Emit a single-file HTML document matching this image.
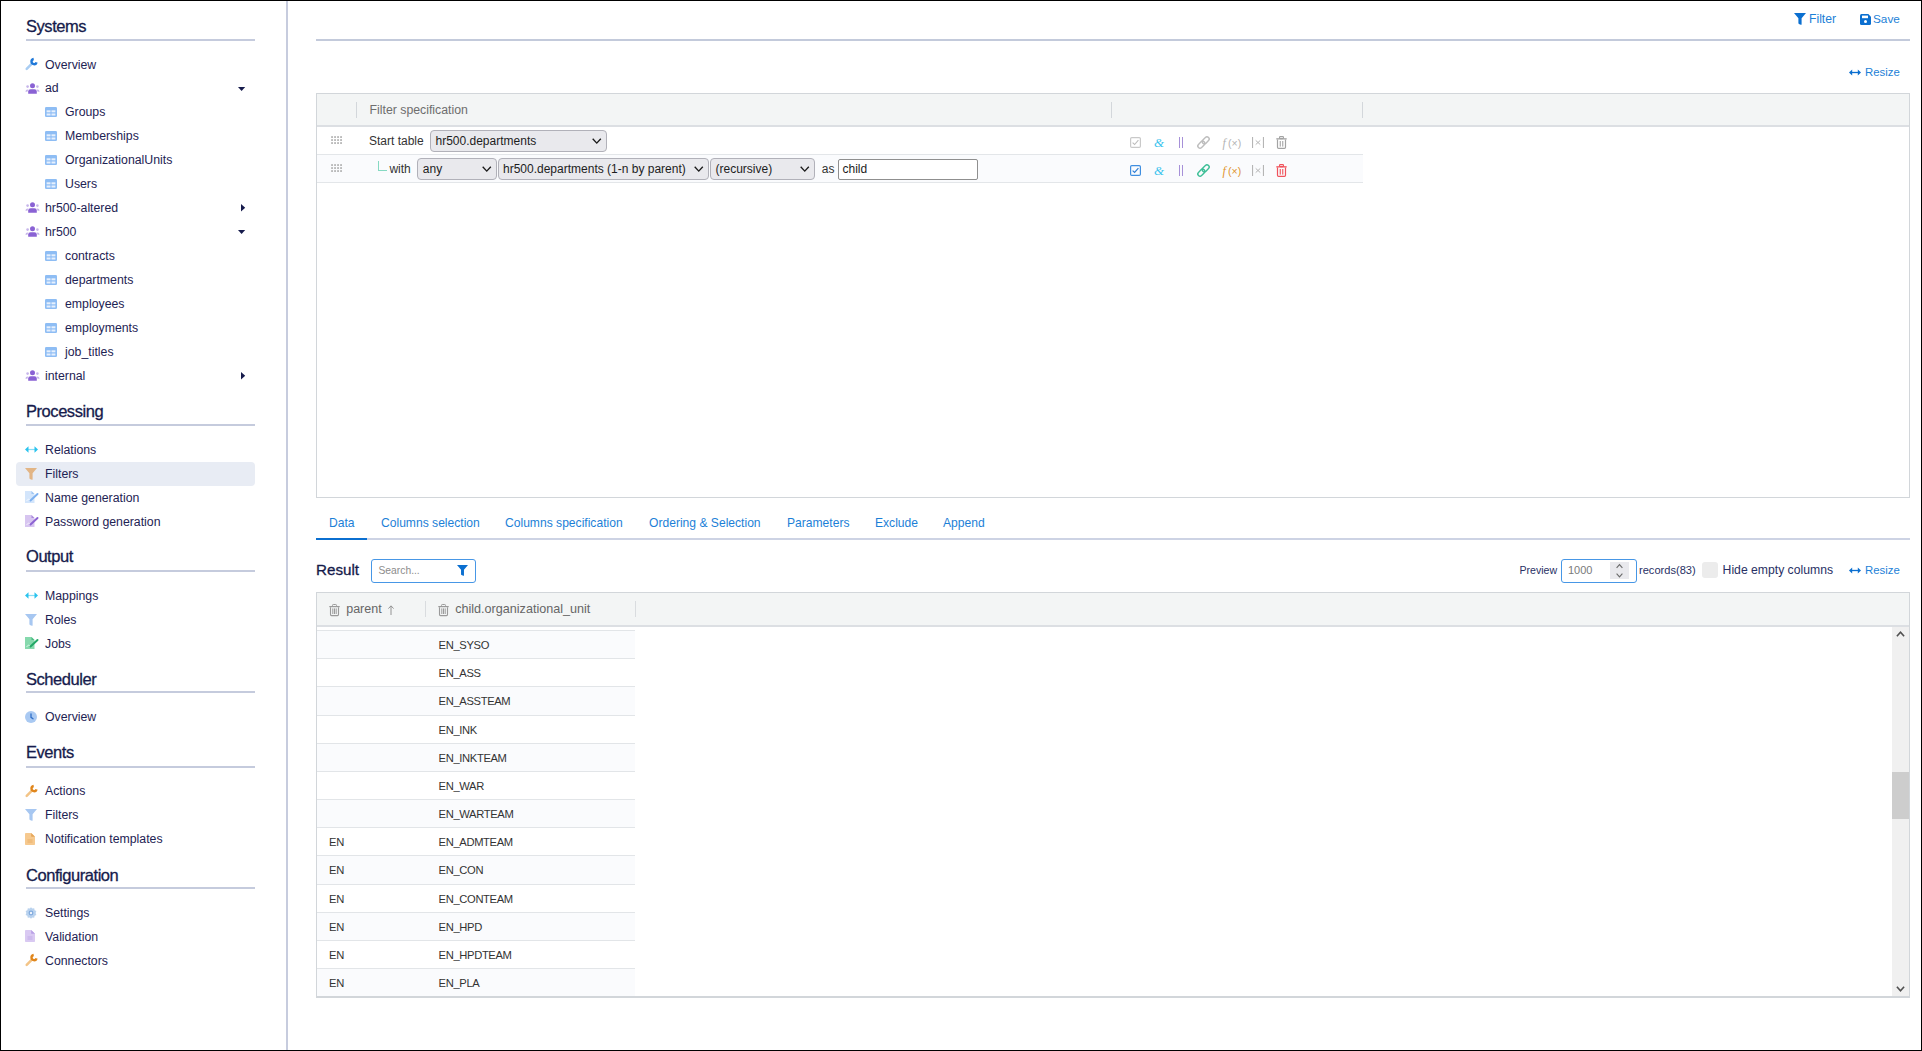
<!DOCTYPE html><html><head><meta charset="utf-8"><style>
html,body{margin:0;padding:0;background:#fff;}
body{width:1922px;height:1051px;position:relative;overflow:hidden;font-family:"Liberation Sans",sans-serif;}
.a{position:absolute;}
.t{position:absolute;white-space:nowrap;line-height:0;}
svg{overflow:visible}
</style></head><body>
<div class="a" style="left:0px;top:0px;width:1922px;height:1px;background:#000"></div>
<div class="a" style="left:0px;top:1050px;width:1922px;height:1px;background:#000"></div>
<div class="a" style="left:0px;top:0px;width:1px;height:1051px;background:#000"></div>
<div class="a" style="left:1921px;top:0px;width:1px;height:1051px;background:#000"></div>
<div class="a" style="left:286px;top:1px;width:2px;height:1049px;background:#c7ccde"></div>
<div class="a" style="left:16px;top:462px;width:239px;height:24px;background:#e8ecf4;border-radius:4px"></div>
<div class="t" style="left:26px;top:26.28px;font-size:16.5px;color:#161b4c;letter-spacing:-0.45px;-webkit-text-stroke:0.3px #161b4c">Systems</div>
<div class="a" style="left:26px;top:39px;width:229px;height:2px;background:#c5cbdd"></div>
<svg class="a" style="left:25px;top:57.8px" width="13" height="13" viewBox="0 0 13 13"><path d="M6.9 5.6 L1.7 10.8" stroke="#a9cdf3" stroke-width="2.5" stroke-linecap="round"/><path d="M11.6 4.3 A2.6 2.6 0 1 1 8.7 1.0" stroke="#1f78d8" stroke-width="2.4" fill="none"/></svg>
<div class="t" style="left:45px;top:64.54px;font-size:12.3px;color:#1e2354;">Overview</div>
<svg class="a" style="left:25px;top:82.74px" width="15" height="11" viewBox="0 0 15 11"><circle cx="7.5" cy="2.7" r="2.5" fill="#8a62d4"/><path d="M3.2 10.8 V8.6 Q3.2 6.3 5.6 6.3 H9.4 Q11.8 6.3 11.8 8.6 V10.8 Z" fill="#8a62d4"/><circle cx="2.6" cy="3.6" r="1.3" fill="#c6b5ea"/><circle cx="12.4" cy="3.6" r="1.3" fill="#c6b5ea"/><path d="M0.4 8.8 Q0.6 6.6 2.6 6.6 Q3.2 6.6 3.5 6.9 Q2.5 7.6 2.4 8.8 Z" fill="#c6b5ea"/><path d="M14.6 8.8 Q14.4 6.6 12.4 6.6 Q11.8 6.6 11.5 6.9 Q12.5 7.6 12.6 8.8 Z" fill="#c6b5ea"/></svg>
<div class="t" style="left:45px;top:88.48px;font-size:12.3px;color:#1e2354;">ad</div>
<svg class="a" style="left:237.7px;top:86.53999999999999px" width="7" height="4" viewBox="0 0 7 4"><path d="M0 0 H7.2 L3.6 4 Z" fill="#161b4c"/></svg>
<svg class="a" style="left:45px;top:107.38000000000001px" width="12" height="10" viewBox="0 0 12 10"><rect x="0" y="0" width="12" height="10" rx="1.3" fill="#8ebdf4"/><rect x="1.6" y="3.3" width="3.9" height="2" fill="#e6f0fd"/><rect x="6.5" y="3.3" width="3.9" height="2" fill="#e6f0fd"/><rect x="1.6" y="6.5" width="3.9" height="2" fill="#e6f0fd"/><rect x="6.5" y="6.5" width="3.9" height="2" fill="#e6f0fd"/></svg>
<div class="t" style="left:65px;top:112.42px;font-size:12.3px;color:#1e2354;">Groups</div>
<svg class="a" style="left:45px;top:131.32px" width="12" height="10" viewBox="0 0 12 10"><rect x="0" y="0" width="12" height="10" rx="1.3" fill="#8ebdf4"/><rect x="1.6" y="3.3" width="3.9" height="2" fill="#e6f0fd"/><rect x="6.5" y="3.3" width="3.9" height="2" fill="#e6f0fd"/><rect x="1.6" y="6.5" width="3.9" height="2" fill="#e6f0fd"/><rect x="6.5" y="6.5" width="3.9" height="2" fill="#e6f0fd"/></svg>
<div class="t" style="left:65px;top:136.36px;font-size:12.3px;color:#1e2354;">Memberships</div>
<svg class="a" style="left:45px;top:155.26px" width="12" height="10" viewBox="0 0 12 10"><rect x="0" y="0" width="12" height="10" rx="1.3" fill="#8ebdf4"/><rect x="1.6" y="3.3" width="3.9" height="2" fill="#e6f0fd"/><rect x="6.5" y="3.3" width="3.9" height="2" fill="#e6f0fd"/><rect x="1.6" y="6.5" width="3.9" height="2" fill="#e6f0fd"/><rect x="6.5" y="6.5" width="3.9" height="2" fill="#e6f0fd"/></svg>
<div class="t" style="left:65px;top:160.30px;font-size:12.3px;color:#1e2354;">OrganizationalUnits</div>
<svg class="a" style="left:45px;top:179.2px" width="12" height="10" viewBox="0 0 12 10"><rect x="0" y="0" width="12" height="10" rx="1.3" fill="#8ebdf4"/><rect x="1.6" y="3.3" width="3.9" height="2" fill="#e6f0fd"/><rect x="6.5" y="3.3" width="3.9" height="2" fill="#e6f0fd"/><rect x="1.6" y="6.5" width="3.9" height="2" fill="#e6f0fd"/><rect x="6.5" y="6.5" width="3.9" height="2" fill="#e6f0fd"/></svg>
<div class="t" style="left:65px;top:184.24px;font-size:12.3px;color:#1e2354;">Users</div>
<svg class="a" style="left:25px;top:202.44px" width="15" height="11" viewBox="0 0 15 11"><circle cx="7.5" cy="2.7" r="2.5" fill="#8a62d4"/><path d="M3.2 10.8 V8.6 Q3.2 6.3 5.6 6.3 H9.4 Q11.8 6.3 11.8 8.6 V10.8 Z" fill="#8a62d4"/><circle cx="2.6" cy="3.6" r="1.3" fill="#c6b5ea"/><circle cx="12.4" cy="3.6" r="1.3" fill="#c6b5ea"/><path d="M0.4 8.8 Q0.6 6.6 2.6 6.6 Q3.2 6.6 3.5 6.9 Q2.5 7.6 2.4 8.8 Z" fill="#c6b5ea"/><path d="M14.6 8.8 Q14.4 6.6 12.4 6.6 Q11.8 6.6 11.5 6.9 Q12.5 7.6 12.6 8.8 Z" fill="#c6b5ea"/></svg>
<div class="t" style="left:45px;top:208.18px;font-size:12.3px;color:#1e2354;">hr500-altered</div>
<svg class="a" style="left:241.2px;top:204.44px" width="5" height="8" viewBox="0 0 5 8"><path d="M0 0 V7.4 L4.2 3.7 Z" fill="#161b4c"/></svg>
<svg class="a" style="left:25px;top:226.38px" width="15" height="11" viewBox="0 0 15 11"><circle cx="7.5" cy="2.7" r="2.5" fill="#8a62d4"/><path d="M3.2 10.8 V8.6 Q3.2 6.3 5.6 6.3 H9.4 Q11.8 6.3 11.8 8.6 V10.8 Z" fill="#8a62d4"/><circle cx="2.6" cy="3.6" r="1.3" fill="#c6b5ea"/><circle cx="12.4" cy="3.6" r="1.3" fill="#c6b5ea"/><path d="M0.4 8.8 Q0.6 6.6 2.6 6.6 Q3.2 6.6 3.5 6.9 Q2.5 7.6 2.4 8.8 Z" fill="#c6b5ea"/><path d="M14.6 8.8 Q14.4 6.6 12.4 6.6 Q11.8 6.6 11.5 6.9 Q12.5 7.6 12.6 8.8 Z" fill="#c6b5ea"/></svg>
<div class="t" style="left:45px;top:232.12px;font-size:12.3px;color:#1e2354;">hr500</div>
<svg class="a" style="left:237.7px;top:230.18px" width="7" height="4" viewBox="0 0 7 4"><path d="M0 0 H7.2 L3.6 4 Z" fill="#161b4c"/></svg>
<svg class="a" style="left:45px;top:251.01999999999998px" width="12" height="10" viewBox="0 0 12 10"><rect x="0" y="0" width="12" height="10" rx="1.3" fill="#8ebdf4"/><rect x="1.6" y="3.3" width="3.9" height="2" fill="#e6f0fd"/><rect x="6.5" y="3.3" width="3.9" height="2" fill="#e6f0fd"/><rect x="1.6" y="6.5" width="3.9" height="2" fill="#e6f0fd"/><rect x="6.5" y="6.5" width="3.9" height="2" fill="#e6f0fd"/></svg>
<div class="t" style="left:65px;top:256.06px;font-size:12.3px;color:#1e2354;">contracts</div>
<svg class="a" style="left:45px;top:274.96px" width="12" height="10" viewBox="0 0 12 10"><rect x="0" y="0" width="12" height="10" rx="1.3" fill="#8ebdf4"/><rect x="1.6" y="3.3" width="3.9" height="2" fill="#e6f0fd"/><rect x="6.5" y="3.3" width="3.9" height="2" fill="#e6f0fd"/><rect x="1.6" y="6.5" width="3.9" height="2" fill="#e6f0fd"/><rect x="6.5" y="6.5" width="3.9" height="2" fill="#e6f0fd"/></svg>
<div class="t" style="left:65px;top:280.00px;font-size:12.3px;color:#1e2354;">departments</div>
<svg class="a" style="left:45px;top:298.9px" width="12" height="10" viewBox="0 0 12 10"><rect x="0" y="0" width="12" height="10" rx="1.3" fill="#8ebdf4"/><rect x="1.6" y="3.3" width="3.9" height="2" fill="#e6f0fd"/><rect x="6.5" y="3.3" width="3.9" height="2" fill="#e6f0fd"/><rect x="1.6" y="6.5" width="3.9" height="2" fill="#e6f0fd"/><rect x="6.5" y="6.5" width="3.9" height="2" fill="#e6f0fd"/></svg>
<div class="t" style="left:65px;top:303.94px;font-size:12.3px;color:#1e2354;">employees</div>
<svg class="a" style="left:45px;top:322.84000000000003px" width="12" height="10" viewBox="0 0 12 10"><rect x="0" y="0" width="12" height="10" rx="1.3" fill="#8ebdf4"/><rect x="1.6" y="3.3" width="3.9" height="2" fill="#e6f0fd"/><rect x="6.5" y="3.3" width="3.9" height="2" fill="#e6f0fd"/><rect x="1.6" y="6.5" width="3.9" height="2" fill="#e6f0fd"/><rect x="6.5" y="6.5" width="3.9" height="2" fill="#e6f0fd"/></svg>
<div class="t" style="left:65px;top:327.88px;font-size:12.3px;color:#1e2354;">employments</div>
<svg class="a" style="left:45px;top:346.78000000000003px" width="12" height="10" viewBox="0 0 12 10"><rect x="0" y="0" width="12" height="10" rx="1.3" fill="#8ebdf4"/><rect x="1.6" y="3.3" width="3.9" height="2" fill="#e6f0fd"/><rect x="6.5" y="3.3" width="3.9" height="2" fill="#e6f0fd"/><rect x="1.6" y="6.5" width="3.9" height="2" fill="#e6f0fd"/><rect x="6.5" y="6.5" width="3.9" height="2" fill="#e6f0fd"/></svg>
<div class="t" style="left:65px;top:351.82px;font-size:12.3px;color:#1e2354;">job_titles</div>
<svg class="a" style="left:25px;top:370.02000000000004px" width="15" height="11" viewBox="0 0 15 11"><circle cx="7.5" cy="2.7" r="2.5" fill="#8a62d4"/><path d="M3.2 10.8 V8.6 Q3.2 6.3 5.6 6.3 H9.4 Q11.8 6.3 11.8 8.6 V10.8 Z" fill="#8a62d4"/><circle cx="2.6" cy="3.6" r="1.3" fill="#c6b5ea"/><circle cx="12.4" cy="3.6" r="1.3" fill="#c6b5ea"/><path d="M0.4 8.8 Q0.6 6.6 2.6 6.6 Q3.2 6.6 3.5 6.9 Q2.5 7.6 2.4 8.8 Z" fill="#c6b5ea"/><path d="M14.6 8.8 Q14.4 6.6 12.4 6.6 Q11.8 6.6 11.5 6.9 Q12.5 7.6 12.6 8.8 Z" fill="#c6b5ea"/></svg>
<div class="t" style="left:45px;top:375.76px;font-size:12.3px;color:#1e2354;">internal</div>
<svg class="a" style="left:241.2px;top:372.02000000000004px" width="5" height="8" viewBox="0 0 5 8"><path d="M0 0 V7.4 L4.2 3.7 Z" fill="#161b4c"/></svg>
<div class="t" style="left:26px;top:410.88px;font-size:16.5px;color:#161b4c;letter-spacing:-0.45px;-webkit-text-stroke:0.3px #161b4c">Processing</div>
<div class="a" style="left:26px;top:424px;width:229px;height:2px;background:#c5cbdd"></div>
<svg class="a" style="left:25px;top:445.9px" width="13" height="7" viewBox="0 0 13 7"><path d="M2 3.5 H11" stroke="#29c3ee" stroke-width="1.2" opacity="0.55"/><path d="M0 3.5 L3.5 0.3 V6.7 Z" fill="#29c3ee"/><path d="M13 3.5 L9.5 0.3 V6.7 Z" fill="#29c3ee"/></svg>
<div class="t" style="left:45px;top:450.24px;font-size:12.3px;color:#1e2354;">Relations</div>
<svg class="a" style="left:25px;top:467.94px" width="12" height="12" viewBox="0 0 12 12"><path d="M0 0 H12 L7.6 5.2 V11.2 Q7.6 12 6.8 11.7 L4.9 10.9 Q4.4 10.7 4.4 10.1 V5.2 Z" fill="#e2b585"/></svg>
<div class="t" style="left:45px;top:474.18px;font-size:12.3px;color:#1e2354;">Filters</div>
<svg class="a" style="left:25px;top:491.38px" width="14" height="12" viewBox="0 0 14 12"><path d="M0 0 H6.5 L9.5 3 V12 H0 Z" fill="#d3e5fb"/><path d="M6.5 0 V3 H9.5 Z" fill="#7db0ef" opacity="0.6"/><path d="M1.5 10 L3.5 8 L5 9.2" stroke="#fff" stroke-width="0.9" fill="none" opacity="0.8"/><path d="M5.5 9.5 L12.5 3" stroke="#7db0ef" stroke-width="2" stroke-linecap="round"/></svg>
<div class="t" style="left:45px;top:498.12px;font-size:12.3px;color:#1e2354;">Name generation</div>
<svg class="a" style="left:25px;top:515.32px" width="14" height="12" viewBox="0 0 14 12"><path d="M0 0 H6.5 L9.5 3 V12 H0 Z" fill="#d7c5f0"/><path d="M6.5 0 V3 H9.5 Z" fill="#8c62d2" opacity="0.6"/><path d="M1.5 10 L3.5 8 L5 9.2" stroke="#fff" stroke-width="0.9" fill="none" opacity="0.8"/><path d="M5.5 9.5 L12.5 3" stroke="#8c62d2" stroke-width="2" stroke-linecap="round"/></svg>
<div class="t" style="left:45px;top:522.06px;font-size:12.3px;color:#1e2354;">Password generation</div>
<div class="t" style="left:26px;top:556.28px;font-size:16.5px;color:#161b4c;letter-spacing:-0.45px;-webkit-text-stroke:0.3px #161b4c">Output</div>
<div class="a" style="left:26px;top:570px;width:229px;height:2px;background:#c5cbdd"></div>
<svg class="a" style="left:25px;top:591.5px" width="13" height="7" viewBox="0 0 13 7"><path d="M2 3.5 H11" stroke="#29c3ee" stroke-width="1.2" opacity="0.55"/><path d="M0 3.5 L3.5 0.3 V6.7 Z" fill="#29c3ee"/><path d="M13 3.5 L9.5 0.3 V6.7 Z" fill="#29c3ee"/></svg>
<div class="t" style="left:45px;top:595.84px;font-size:12.3px;color:#1e2354;">Mappings</div>
<svg class="a" style="left:25px;top:613.5400000000001px" width="12" height="12" viewBox="0 0 12 12"><path d="M0 0 H12 L7.6 5.2 V11.2 Q7.6 12 6.8 11.7 L4.9 10.9 Q4.4 10.7 4.4 10.1 V5.2 Z" fill="#a7c7f1"/></svg>
<div class="t" style="left:45px;top:619.78px;font-size:12.3px;color:#1e2354;">Roles</div>
<svg class="a" style="left:25px;top:636.98px" width="14" height="12" viewBox="0 0 14 12"><path d="M0 0 H6.5 L9.5 3 V12 H0 Z" fill="#86d9ad"/><path d="M6.5 0 V3 H9.5 Z" fill="#22a866" opacity="0.6"/><path d="M1.5 10 L3.5 8 L5 9.2" stroke="#fff" stroke-width="0.9" fill="none" opacity="0.8"/><path d="M5.5 9.5 L12.5 3" stroke="#22a866" stroke-width="2" stroke-linecap="round"/></svg>
<div class="t" style="left:45px;top:643.72px;font-size:12.3px;color:#1e2354;">Jobs</div>
<div class="t" style="left:26px;top:678.78px;font-size:16.5px;color:#161b4c;letter-spacing:-0.45px;-webkit-text-stroke:0.3px #161b4c">Scheduler</div>
<div class="a" style="left:26px;top:691px;width:229px;height:2px;background:#c5cbdd"></div>
<svg class="a" style="left:25px;top:711.0px" width="12" height="12" viewBox="0 0 12 12"><circle cx="6" cy="6" r="6" fill="#a9c9f2"/><path d="M6 2.8 V6.3 L8 7.8" stroke="#2f6fc7" stroke-width="1.3" fill="none" stroke-linecap="round"/></svg>
<div class="t" style="left:45px;top:717.24px;font-size:12.3px;color:#1e2354;">Overview</div>
<div class="t" style="left:26px;top:751.88px;font-size:16.5px;color:#161b4c;letter-spacing:-0.45px;-webkit-text-stroke:0.3px #161b4c">Events</div>
<div class="a" style="left:26px;top:766px;width:229px;height:2px;background:#c5cbdd"></div>
<svg class="a" style="left:25px;top:784.7px" width="13" height="13" viewBox="0 0 13 13"><path d="M6.9 5.6 L1.7 10.8" stroke="#f3c487" stroke-width="2.5" stroke-linecap="round"/><path d="M11.6 4.3 A2.6 2.6 0 1 1 8.7 1.0" stroke="#e0861c" stroke-width="2.4" fill="none"/></svg>
<div class="t" style="left:45px;top:791.44px;font-size:12.3px;color:#1e2354;">Actions</div>
<svg class="a" style="left:25px;top:809.1400000000001px" width="12" height="12" viewBox="0 0 12 12"><path d="M0 0 H12 L7.6 5.2 V11.2 Q7.6 12 6.8 11.7 L4.9 10.9 Q4.4 10.7 4.4 10.1 V5.2 Z" fill="#a7c7f1"/></svg>
<div class="t" style="left:45px;top:815.38px;font-size:12.3px;color:#1e2354;">Filters</div>
<svg class="a" style="left:25px;top:832.58px" width="10" height="12" viewBox="0 0 10 12"><path d="M0 0.8 Q0 0 0.8 0 H6.2 L10 3.8 V11.2 Q10 12 9.2 12 H0.8 Q0 12 0 11.2 Z" fill="#f6c98f"/><path d="M6.2 0 V3.8 H10 Z" fill="#e5a65a"/><rect x="2.5" y="6.5" width="5" height="1" fill="#e5a65a" opacity="0.7"/><rect x="2.5" y="8.5" width="5" height="1" fill="#e5a65a" opacity="0.7"/></svg>
<div class="t" style="left:45px;top:839.32px;font-size:12.3px;color:#1e2354;">Notification templates</div>
<div class="t" style="left:26px;top:874.88px;font-size:16.5px;color:#161b4c;letter-spacing:-0.45px;-webkit-text-stroke:0.3px #161b4c">Configuration</div>
<div class="a" style="left:26px;top:887px;width:229px;height:2px;background:#c5cbdd"></div>
<svg class="a" style="left:25px;top:906.7px" width="12" height="12" viewBox="0 0 12 12"><path d="M6 0.2 L7.3 1.6 L9.2 1.3 L9.6 3.2 L11.4 4.1 L10.6 6 L11.4 7.9 L9.6 8.8 L9.2 10.7 L7.3 10.4 L6 11.8 L4.7 10.4 L2.8 10.7 L2.4 8.8 L0.6 7.9 L1.4 6 L0.6 4.1 L2.4 3.2 L2.8 1.3 L4.7 1.6 Z" fill="#b9d2ee"/><circle cx="6" cy="6" r="2.4" fill="#7fa9de"/><circle cx="6" cy="6" r="1.2" fill="#eef4fc"/></svg>
<div class="t" style="left:45px;top:912.94px;font-size:12.3px;color:#1e2354;">Settings</div>
<svg class="a" style="left:25px;top:930.1400000000001px" width="10" height="12" viewBox="0 0 10 12"><path d="M0 0.8 Q0 0 0.8 0 H6.2 L10 3.8 V11.2 Q10 12 9.2 12 H0.8 Q0 12 0 11.2 Z" fill="#d9c9f2"/><path d="M6.2 0 V3.8 H10 Z" fill="#b9a0e6"/><rect x="2.5" y="6.5" width="5" height="1" fill="#b9a0e6" opacity="0.7"/><rect x="2.5" y="8.5" width="5" height="1" fill="#b9a0e6" opacity="0.7"/></svg>
<div class="t" style="left:45px;top:936.88px;font-size:12.3px;color:#1e2354;">Validation</div>
<svg class="a" style="left:25px;top:954.08px" width="13" height="13" viewBox="0 0 13 13"><path d="M6.9 5.6 L1.7 10.8" stroke="#f3c487" stroke-width="2.5" stroke-linecap="round"/><path d="M11.6 4.3 A2.6 2.6 0 1 1 8.7 1.0" stroke="#e0861c" stroke-width="2.4" fill="none"/></svg>
<div class="t" style="left:45px;top:960.82px;font-size:12.3px;color:#1e2354;">Connectors</div>
<svg class="a" style="left:1794px;top:13px" width="12" height="12" viewBox="0 0 12 12"><path d="M0 0 H12 L7.6 5.2 V11.2 Q7.6 12 6.8 11.7 L4.9 10.9 Q4.4 10.7 4.4 10.1 V5.2 Z" fill="#0b6fd0"/></svg>
<div class="t" style="left:1809px;top:18.97px;font-size:12.2px;color:#1c7fd7;">Filter</div>
<svg class="a" style="left:1859.5px;top:13.5px" width="11" height="11" viewBox="0 0 11 11"><path d="M0 1.5 Q0 0 1.5 0 H8.3 L11 2.7 V9.5 Q11 11 9.5 11 H1.5 Q0 11 0 9.5 Z" fill="#0b6fd0"/><rect x="2" y="1.6" width="6" height="2.6" fill="#fff"/><circle cx="5.5" cy="7.4" r="1.5" fill="#fff"/></svg>
<div class="t" style="left:1873px;top:19.11px;font-size:11.8px;color:#1c7fd7;">Save</div>
<div class="a" style="left:316px;top:39px;width:1594px;height:2px;background:#c3cadb"></div>
<svg class="a" style="left:1849px;top:68.5px" width="12" height="7" viewBox="0 0 12 7"><path d="M2 3.5 H10" stroke="#0b6fd0" stroke-width="1.3"/><path d="M0 3.5 L3.2 0.6 V6.4 Z" fill="#0b6fd0"/><path d="M12 3.5 L8.8 0.6 V6.4 Z" fill="#0b6fd0"/></svg>
<div class="t" style="left:1865px;top:71.85px;font-size:11.4px;color:#1c7fd7;">Resize</div>
<div class="a" style="left:316px;top:93px;width:1594px;height:405px;box-sizing:border-box;border:1px solid #d2d6da"></div>
<div class="a" style="left:317px;top:94px;width:1592px;height:31px;background:#f3f5f5"></div>
<div class="a" style="left:317px;top:125px;width:1592px;height:2px;background:#dcdfe3"></div>
<div class="a" style="left:356px;top:102px;width:1px;height:16px;background:#d3d7db"></div>
<div class="a" style="left:1111px;top:102px;width:1px;height:16px;background:#d3d7db"></div>
<div class="a" style="left:1362px;top:102px;width:1px;height:16px;background:#d3d7db"></div>
<div class="t" style="left:369.5px;top:110.04px;font-size:12.3px;color:#6e6e6e;">Filter specification</div>
<div class="a" style="left:317px;top:154px;width:1046px;height:1px;background:#e3e6e9"></div>
<div class="a" style="left:317px;top:155px;width:1046px;height:27px;background:#fafbfd"></div>
<div class="a" style="left:317px;top:182px;width:1046px;height:1px;background:#e3e6e9"></div>
<svg class="a" style="left:331px;top:136px" width="11" height="8" viewBox="0 0 11 8"><rect x="0.2" y="0.2" width="1.7" height="1.7" fill="#ababab"/><rect x="0.2" y="3.2" width="1.7" height="1.7" fill="#ababab"/><rect x="0.2" y="6.2" width="1.7" height="1.7" fill="#ababab"/><rect x="3.2" y="0.2" width="1.7" height="1.7" fill="#ababab"/><rect x="3.2" y="3.2" width="1.7" height="1.7" fill="#ababab"/><rect x="3.2" y="6.2" width="1.7" height="1.7" fill="#ababab"/><rect x="6.2" y="0.2" width="1.7" height="1.7" fill="#ababab"/><rect x="6.2" y="3.2" width="1.7" height="1.7" fill="#ababab"/><rect x="6.2" y="6.2" width="1.7" height="1.7" fill="#ababab"/><rect x="9.2" y="0.2" width="1.7" height="1.7" fill="#ababab"/><rect x="9.2" y="3.2" width="1.7" height="1.7" fill="#ababab"/><rect x="9.2" y="6.2" width="1.7" height="1.7" fill="#ababab"/></svg>
<svg class="a" style="left:331px;top:164px" width="11" height="8" viewBox="0 0 11 8"><rect x="0.2" y="0.2" width="1.7" height="1.7" fill="#ababab"/><rect x="0.2" y="3.2" width="1.7" height="1.7" fill="#ababab"/><rect x="0.2" y="6.2" width="1.7" height="1.7" fill="#ababab"/><rect x="3.2" y="0.2" width="1.7" height="1.7" fill="#ababab"/><rect x="3.2" y="3.2" width="1.7" height="1.7" fill="#ababab"/><rect x="3.2" y="6.2" width="1.7" height="1.7" fill="#ababab"/><rect x="6.2" y="0.2" width="1.7" height="1.7" fill="#ababab"/><rect x="6.2" y="3.2" width="1.7" height="1.7" fill="#ababab"/><rect x="6.2" y="6.2" width="1.7" height="1.7" fill="#ababab"/><rect x="9.2" y="0.2" width="1.7" height="1.7" fill="#ababab"/><rect x="9.2" y="3.2" width="1.7" height="1.7" fill="#ababab"/><rect x="9.2" y="6.2" width="1.7" height="1.7" fill="#ababab"/></svg>
<div class="t" style="left:369px;top:141.04px;font-size:12px;color:#333;">Start table</div>
<div class="a" style="left:430px;top:130px;width:177px;height:21.5px;box-sizing:border-box;background:#e9e9ed;border:1px solid #b1b1b9;border-radius:4px"></div>
<div class="t" style="left:435.5px;top:140.64px;font-size:12px;color:#1d1d1d;">hr500.departments</div>
<svg class="a" style="left:591.5px;top:138px" width="9.5" height="5.8" viewBox="0 0 9.5 5.8"><path d="M0.7 0.7 L4.75 5.1 L8.8 0.7" stroke="#1a1a1a" stroke-width="1.35" fill="none"/></svg>
<div class="a" style="left:378px;top:161px;width:1px;height:9.5px;background:#86d9c2"></div>
<div class="a" style="left:378px;top:169.5px;width:8.5px;height:1px;background:#86d9c2"></div>
<div class="t" style="left:389.4px;top:168.64px;font-size:12px;color:#333;">with</div>
<div class="a" style="left:417px;top:158px;width:79.5px;height:22px;box-sizing:border-box;background:#e9e9ed;border:1px solid #b1b1b9;border-radius:4px"></div>
<div class="t" style="left:422.8px;top:168.64px;font-size:12px;color:#1d1d1d;">any</div>
<svg class="a" style="left:481.5px;top:166px" width="9.5" height="5.8" viewBox="0 0 9.5 5.8"><path d="M0.7 0.7 L4.75 5.1 L8.8 0.7" stroke="#1a1a1a" stroke-width="1.35" fill="none"/></svg>
<div class="a" style="left:497.5px;top:158px;width:211.5px;height:22px;box-sizing:border-box;background:#e9e9ed;border:1px solid #b1b1b9;border-radius:4px"></div>
<div class="t" style="left:503.0px;top:168.64px;font-size:12px;color:#1d1d1d;">hr500.departments (1-n by parent)</div>
<svg class="a" style="left:693.5px;top:166px" width="9.5" height="5.8" viewBox="0 0 9.5 5.8"><path d="M0.7 0.7 L4.75 5.1 L8.8 0.7" stroke="#1a1a1a" stroke-width="1.35" fill="none"/></svg>
<div class="a" style="left:710px;top:158px;width:105px;height:22px;box-sizing:border-box;background:#e9e9ed;border:1px solid #b1b1b9;border-radius:4px"></div>
<div class="t" style="left:715.5px;top:168.64px;font-size:12px;color:#1d1d1d;">(recursive)</div>
<svg class="a" style="left:799.5px;top:166px" width="9.5" height="5.8" viewBox="0 0 9.5 5.8"><path d="M0.7 0.7 L4.75 5.1 L8.8 0.7" stroke="#1a1a1a" stroke-width="1.35" fill="none"/></svg>
<div class="t" style="left:821.8px;top:168.64px;font-size:12px;color:#333;">as</div>
<div class="a" style="left:838px;top:159px;width:140px;height:20.5px;box-sizing:border-box;background:#fff;border:1px solid #8f8f8f;border-radius:2px"></div>
<div class="t" style="left:842.5px;top:168.84px;font-size:12px;color:#1d1d1d;">child</div>
<svg class="a" style="left:1130px;top:137px" width="11" height="11" viewBox="0 0 11 11"><rect x="0.6" y="0.6" width="9.8" height="9.8" rx="1.2" fill="none" stroke="#c9c9c9" stroke-width="1.2"/><path d="M2.6 5.6 L4.6 7.5 L8.4 3.2" stroke="#bdbdbd" stroke-width="1.1" fill="none"/></svg>
<div class="t" style="left:1154px;top:143.2px;font:italic 13px 'Liberation Serif';line-height:0;color:#3cc4ee">&amp;</div>
<div class="a" style="left:1179px;top:137.3px;width:1.4px;height:10.6px;background:#a690d8"></div>
<div class="a" style="left:1182px;top:137.3px;width:1.4px;height:10.6px;background:#a690d8"></div>
<svg class="a" style="left:1197px;top:136px" width="13" height="13" viewBox="0 0 13 13"><g transform="rotate(-45 6.5 6.5)" fill="none" stroke="#bdbdbd" stroke-width="1.4"><rect x="-0.6" y="4.3" width="8" height="4.4" rx="2.2"/><rect x="5.6" y="4.3" width="8" height="4.4" rx="2.2"/></g></svg>
<div class="t" style="left:1222.5px;top:142.7px;font:italic 12px 'Liberation Serif';line-height:0;color:#b3b3b3">f</div>
<div class="t" style="left:1228px;top:143.10000000000002px;font:10.5px 'Liberation Sans';line-height:0;color:#b3b3b3">(&#215;)</div>
<svg class="a" style="left:1251.5px;top:137px" width="12" height="11" viewBox="0 0 12 11"><rect x="0" y="0" width="1.1" height="11" fill="#b5b5b5"/><rect x="10.9" y="0" width="1.1" height="11" fill="#b5b5b5"/><path d="M3.7 3.4 L8.3 7.6 M8.3 3.4 L3.7 7.6" stroke="#b5b5b5" stroke-width="1"/></svg>
<svg class="a" style="left:1276px;top:136px" width="11" height="13" viewBox="0 0 11 13"><rect x="3.5" y="0.6" width="4" height="2" rx="0.8" fill="none" stroke="#a3a3a3" stroke-width="1.1"/><rect x="0.3" y="2.2" width="10.4" height="1.3" fill="#a3a3a3"/><path d="M1.5 3.5 V11.3 Q1.5 12.4 2.6 12.4 H8.4 Q9.5 12.4 9.5 11.3 V3.5" fill="none" stroke="#a3a3a3" stroke-width="1.2"/><rect x="3.7" y="5" width="1.1" height="5.6" fill="#a3a3a3"/><rect x="6.2" y="5" width="1.1" height="5.6" fill="#a3a3a3"/></svg>
<svg class="a" style="left:1130px;top:165px" width="11" height="11" viewBox="0 0 11 11"><rect x="0.6" y="0.6" width="9.8" height="9.8" rx="1.2" fill="none" stroke="#3f8ee0" stroke-width="1.2"/><path d="M2.6 5.6 L4.6 7.5 L8.4 3.2" stroke="#2f7fd6" stroke-width="1.2" fill="none"/></svg>
<div class="t" style="left:1154px;top:171.2px;font:italic 13px 'Liberation Serif';line-height:0;color:#3cc4ee">&amp;</div>
<div class="a" style="left:1179px;top:165.3px;width:1.4px;height:10.6px;background:#a690d8"></div>
<div class="a" style="left:1182px;top:165.3px;width:1.4px;height:10.6px;background:#a690d8"></div>
<svg class="a" style="left:1197px;top:164px" width="13" height="13" viewBox="0 0 13 13"><g transform="rotate(-45 6.5 6.5)" fill="none" stroke="#3dbf97" stroke-width="1.4"><rect x="-0.6" y="4.3" width="8" height="4.4" rx="2.2"/><rect x="5.6" y="4.3" width="8" height="4.4" rx="2.2"/></g></svg>
<div class="t" style="left:1222.5px;top:170.7px;font:italic 12px 'Liberation Serif';line-height:0;color:#e0932c">f</div>
<div class="t" style="left:1228px;top:171.10000000000002px;font:10.5px 'Liberation Sans';line-height:0;color:#e0932c">(&#215;)</div>
<svg class="a" style="left:1251.5px;top:165px" width="12" height="11" viewBox="0 0 12 11"><rect x="0" y="0" width="1.1" height="11" fill="#b5b5b5"/><rect x="10.9" y="0" width="1.1" height="11" fill="#b5b5b5"/><path d="M3.7 3.4 L8.3 7.6 M8.3 3.4 L3.7 7.6" stroke="#b5b5b5" stroke-width="1"/></svg>
<svg class="a" style="left:1276px;top:164px" width="11" height="13" viewBox="0 0 11 13"><rect x="3.5" y="0.6" width="4" height="2" rx="0.8" fill="none" stroke="#f0525b" stroke-width="1.1"/><rect x="0.3" y="2.2" width="10.4" height="1.3" fill="#f0525b"/><path d="M1.5 3.5 V11.3 Q1.5 12.4 2.6 12.4 H8.4 Q9.5 12.4 9.5 11.3 V3.5" fill="none" stroke="#f0525b" stroke-width="1.2"/><rect x="3.7" y="5" width="1.1" height="5.6" fill="#f0525b"/><rect x="6.2" y="5" width="1.1" height="5.6" fill="#f0525b"/></svg>
<div class="t" style="left:329px;top:522.61px;font-size:12.1px;color:#1c7fd7;">Data</div>
<div class="t" style="left:381px;top:522.61px;font-size:12.1px;color:#1c7fd7;">Columns selection</div>
<div class="t" style="left:505px;top:522.61px;font-size:12.1px;color:#1c7fd7;">Columns specification</div>
<div class="t" style="left:649px;top:522.61px;font-size:12.1px;color:#1c7fd7;">Ordering &amp; Selection</div>
<div class="t" style="left:787px;top:522.61px;font-size:12.1px;color:#1c7fd7;">Parameters</div>
<div class="t" style="left:875px;top:522.61px;font-size:12.1px;color:#1c7fd7;">Exclude</div>
<div class="t" style="left:943px;top:522.61px;font-size:12.1px;color:#1c7fd7;">Append</div>
<div class="a" style="left:316px;top:538px;width:1594px;height:2px;background:#cdd3e4"></div>
<div class="a" style="left:316px;top:538px;width:51px;height:2px;background:#0b6fd0"></div>
<div class="t" style="left:316px;top:570.33px;font-size:15.2px;color:#141a4a;-webkit-text-stroke:0.3px #141a4a">Result</div>
<div class="a" style="left:371px;top:559px;width:104.5px;height:24px;box-sizing:border-box;border:1px solid #4797e6;border-radius:3px;background:#fff"></div>
<div class="t" style="left:378.5px;top:570.83px;font-size:10.3px;color:#8c8c8c;">Search...</div>
<svg class="a" style="left:457px;top:565px" width="11" height="11" viewBox="0 0 12 12"><path d="M0 0 H12 L7.6 5.2 V11.2 Q7.6 12 6.8 11.7 L4.9 10.9 Q4.4 10.7 4.4 10.1 V5.2 Z" fill="#0b6fd0"/></svg>
<div class="t" style="left:1519.4px;top:569.83px;font-size:10.6px;color:#283064;">Preview</div>
<div class="a" style="left:1560.5px;top:559px;width:76px;height:23.5px;box-sizing:border-box;border:1px solid #4797e6;border-radius:3px;background:#fff"></div>
<div class="t" style="left:1568px;top:570.19px;font-size:11px;color:#7a7a7a;">1000</div>
<div class="a" style="left:1610px;top:561.5px;width:19px;height:17.5px;background:#e9e9ed"></div>
<svg class="a" style="left:1616px;top:563.5px" width="7" height="4.5" viewBox="0 0 7 4.5"><path d="M0.6 3.9 L3.5 0.6 L6.4 3.9" stroke="#6b6b6b" stroke-width="1.1" fill="none"/></svg>
<svg class="a" style="left:1616px;top:572.5px" width="7" height="4.5" viewBox="0 0 7 4.5"><path d="M0.6 0.6 L3.5 3.9 L6.4 0.6" stroke="#6b6b6b" stroke-width="1.1" fill="none"/></svg>
<div class="t" style="left:1639px;top:569.65px;font-size:11.1px;color:#283064;">records(83)</div>
<div class="a" style="left:1702px;top:562px;width:16px;height:16px;background:#ececec;border-radius:3px"></div>
<div class="t" style="left:1722.6px;top:569.57px;font-size:12.2px;color:#283064;">Hide empty columns</div>
<svg class="a" style="left:1849px;top:566.5px" width="12" height="7" viewBox="0 0 12 7"><path d="M2 3.5 H10" stroke="#0b6fd0" stroke-width="1.3"/><path d="M0 3.5 L3.2 0.6 V6.4 Z" fill="#0b6fd0"/><path d="M12 3.5 L8.8 0.6 V6.4 Z" fill="#0b6fd0"/></svg>
<div class="t" style="left:1865px;top:570.45px;font-size:11.4px;color:#1c7fd7;">Resize</div>
<div class="a" style="left:316px;top:592px;width:1594px;height:406px;box-sizing:border-box;border:1px solid #d2d6da;border-bottom:2px solid #d2d6da"></div>
<div class="a" style="left:317px;top:593px;width:1592px;height:32px;background:#f3f5f5"></div>
<div class="a" style="left:317px;top:625px;width:1592px;height:2px;background:#dcdfe3"></div>
<svg class="a" style="left:328.5px;top:603.5px" width="11" height="12" viewBox="0 0 11 12"><rect x="3.5" y="0.5" width="4" height="2" rx="0.8" fill="none" stroke="#9a9a9a" stroke-width="1"/><rect x="0.3" y="2" width="10.4" height="1.2" fill="#9a9a9a"/><path d="M1.5 3.2 V10.6 Q1.5 11.6 2.5 11.6 H8.5 Q9.5 11.6 9.5 10.6 V3.2" fill="none" stroke="#9a9a9a" stroke-width="1.1"/><rect x="3.3" y="4.4" width="1" height="5.6" fill="#9a9a9a"/><rect x="5" y="4.4" width="1" height="5.6" fill="#9a9a9a"/><rect x="6.7" y="4.4" width="1" height="5.6" fill="#9a9a9a"/></svg>
<div class="t" style="left:346.2px;top:609.47px;font-size:12.5px;color:#666;">parent</div>
<svg class="a" style="left:387.5px;top:604.5px" width="6" height="10" viewBox="0 0 6 10"><path d="M3 10 V1 M0.4 3.6 L3 0.8 L5.6 3.6" stroke="#8a8a8a" stroke-width="0.9" fill="none"/></svg>
<div class="a" style="left:425px;top:601px;width:1px;height:16px;background:#d9dcdf"></div>
<svg class="a" style="left:438px;top:603.5px" width="11" height="12" viewBox="0 0 11 12"><rect x="3.5" y="0.5" width="4" height="2" rx="0.8" fill="none" stroke="#9a9a9a" stroke-width="1"/><rect x="0.3" y="2" width="10.4" height="1.2" fill="#9a9a9a"/><path d="M1.5 3.2 V10.6 Q1.5 11.6 2.5 11.6 H8.5 Q9.5 11.6 9.5 10.6 V3.2" fill="none" stroke="#9a9a9a" stroke-width="1.1"/><rect x="3.3" y="4.4" width="1" height="5.6" fill="#9a9a9a"/><rect x="5" y="4.4" width="1" height="5.6" fill="#9a9a9a"/><rect x="6.7" y="4.4" width="1" height="5.6" fill="#9a9a9a"/></svg>
<div class="t" style="left:455.2px;top:609.43px;font-size:12.6px;color:#666;">child.organizational_unit</div>
<div class="a" style="left:635px;top:601px;width:1px;height:16px;background:#d9dcdf"></div>
<div class="a" style="left:317px;top:631px;width:318px;height:27px;background:#fafbfd"></div>
<div class="a" style="left:317px;top:630px;width:318px;height:1px;background:#e2e5e8"></div>
<div class="t" style="left:438.6px;top:645.02px;font-size:11.2px;color:#333;letter-spacing:-0.35px">EN_SYSO</div>
<div class="a" style="left:317px;top:658px;width:318px;height:1px;background:#e2e5e8"></div>
<div class="t" style="left:438.6px;top:673.19px;font-size:11.2px;color:#333;letter-spacing:-0.35px">EN_ASS</div>
<div class="a" style="left:317px;top:687px;width:318px;height:28px;background:#fafbfd"></div>
<div class="a" style="left:317px;top:686px;width:318px;height:1px;background:#e2e5e8"></div>
<div class="t" style="left:438.6px;top:701.35px;font-size:11.2px;color:#333;letter-spacing:-0.35px">EN_ASSTEAM</div>
<div class="a" style="left:317px;top:715px;width:318px;height:1px;background:#e2e5e8"></div>
<div class="t" style="left:438.6px;top:729.52px;font-size:11.2px;color:#333;letter-spacing:-0.35px">EN_INK</div>
<div class="a" style="left:317px;top:744px;width:318px;height:27px;background:#fafbfd"></div>
<div class="a" style="left:317px;top:743px;width:318px;height:1px;background:#e2e5e8"></div>
<div class="t" style="left:438.6px;top:757.69px;font-size:11.2px;color:#333;letter-spacing:-0.35px">EN_INKTEAM</div>
<div class="a" style="left:317px;top:771px;width:318px;height:1px;background:#e2e5e8"></div>
<div class="t" style="left:438.6px;top:785.85px;font-size:11.2px;color:#333;letter-spacing:-0.35px">EN_WAR</div>
<div class="a" style="left:317px;top:800px;width:318px;height:27px;background:#fafbfd"></div>
<div class="a" style="left:317px;top:799px;width:318px;height:1px;background:#e2e5e8"></div>
<div class="t" style="left:438.6px;top:814.02px;font-size:11.2px;color:#333;letter-spacing:-0.35px">EN_WARTEAM</div>
<div class="a" style="left:317px;top:827px;width:318px;height:1px;background:#e2e5e8"></div>
<div class="t" style="left:329px;top:842.19px;font-size:11.2px;color:#333;letter-spacing:-0.2px">EN</div>
<div class="t" style="left:438.6px;top:842.19px;font-size:11.2px;color:#333;letter-spacing:-0.35px">EN_ADMTEAM</div>
<div class="a" style="left:317px;top:856px;width:318px;height:28px;background:#fafbfd"></div>
<div class="a" style="left:317px;top:855px;width:318px;height:1px;background:#e2e5e8"></div>
<div class="t" style="left:329px;top:870.36px;font-size:11.2px;color:#333;letter-spacing:-0.2px">EN</div>
<div class="t" style="left:438.6px;top:870.36px;font-size:11.2px;color:#333;letter-spacing:-0.35px">EN_CON</div>
<div class="a" style="left:317px;top:884px;width:318px;height:1px;background:#e2e5e8"></div>
<div class="t" style="left:329px;top:898.52px;font-size:11.2px;color:#333;letter-spacing:-0.2px">EN</div>
<div class="t" style="left:438.6px;top:898.52px;font-size:11.2px;color:#333;letter-spacing:-0.35px">EN_CONTEAM</div>
<div class="a" style="left:317px;top:913px;width:318px;height:27px;background:#fafbfd"></div>
<div class="a" style="left:317px;top:912px;width:318px;height:1px;background:#e2e5e8"></div>
<div class="t" style="left:329px;top:926.69px;font-size:11.2px;color:#333;letter-spacing:-0.2px">EN</div>
<div class="t" style="left:438.6px;top:926.69px;font-size:11.2px;color:#333;letter-spacing:-0.35px">EN_HPD</div>
<div class="a" style="left:317px;top:940px;width:318px;height:1px;background:#e2e5e8"></div>
<div class="t" style="left:329px;top:954.86px;font-size:11.2px;color:#333;letter-spacing:-0.2px">EN</div>
<div class="t" style="left:438.6px;top:954.86px;font-size:11.2px;color:#333;letter-spacing:-0.35px">EN_HPDTEAM</div>
<div class="a" style="left:317px;top:969px;width:318px;height:27px;background:#fafbfd"></div>
<div class="a" style="left:317px;top:968px;width:318px;height:1px;background:#e2e5e8"></div>
<div class="t" style="left:329px;top:983.02px;font-size:11.2px;color:#333;letter-spacing:-0.2px">EN</div>
<div class="t" style="left:438.6px;top:983.02px;font-size:11.2px;color:#333;letter-spacing:-0.35px">EN_PLA</div>
<div class="a" style="left:1892px;top:627px;width:17px;height:369px;background:#f0f0f0"></div>
<div class="a" style="left:1892px;top:771.5px;width:17px;height:47.5px;background:#cdcdcd"></div>
<svg class="a" style="left:1896px;top:631px" width="9" height="6" viewBox="0 0 9 6"><path d="M0.9 5.2 L4.5 1.2 L8.1 5.2" stroke="#505050" stroke-width="1.6" fill="none"/></svg>
<svg class="a" style="left:1896px;top:986px" width="9" height="6" viewBox="0 0 9 6"><path d="M0.9 0.8 L4.5 4.8 L8.1 0.8" stroke="#505050" stroke-width="1.6" fill="none"/></svg>
</body></html>
